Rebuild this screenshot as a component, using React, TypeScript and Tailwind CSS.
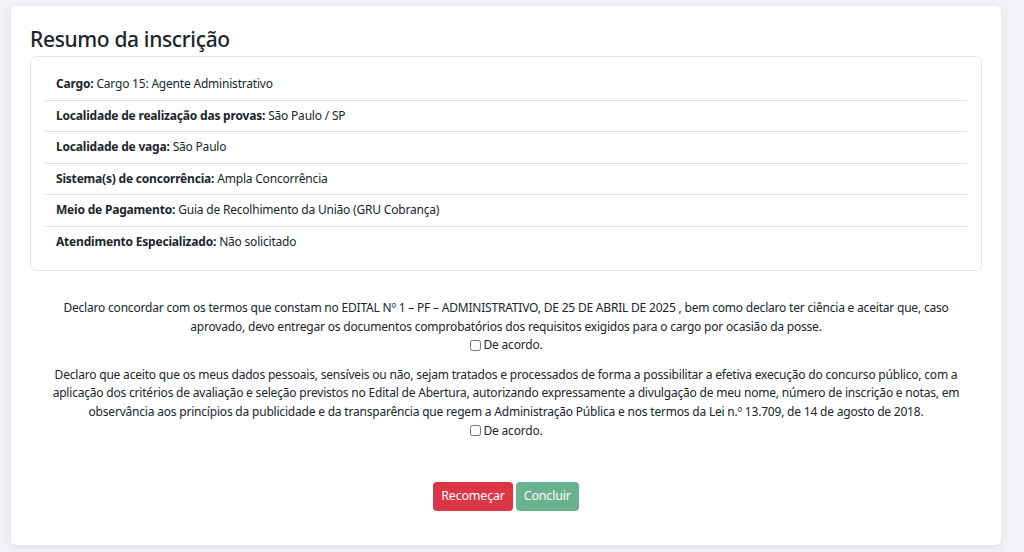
const rows: { label: string; value: string }[] = [
  { label: 'Cargo:', value: 'Cargo 15: Agente Administrativo' },
  { label: 'Localidade de realização das provas:', value: 'São Paulo / SP' },
  { label: 'Localidade de vaga:', value: 'São Paulo' },
  { label: 'Sistema(s) de concorrência:', value: 'Ampla Concorrência' },
  { label: 'Meio de Pagamento:', value: 'Guia de Recolhimento da União (GRU Cobrança)' },
  { label: 'Atendimento Especializado:', value: 'Não solicitado' },
]

function Agree() {
  return (
    <label className="flex items-center justify-center gap-[3px]">
      <input type="checkbox" className="h-[11px] w-[11px] accent-gray-400" />
      De acordo.
    </label>
  )
}

export default function App() {
  return (
    <div
      className="min-h-[552px] bg-[#f1f2f5] pt-[6px] pl-[11px] pr-[23px] text-[#212529]"
      style={{ fontFamily: '"Noto Sans", "Open Sans", sans-serif' }}
    >
      <div className="rounded-[5px] bg-white px-[19px] pt-[19px] pb-[34px] shadow-[0_2px_8px_rgba(0,0,0,0.08)]">
        <h1 className="text-[21px] leading-[29px] font-medium tracking-[-0.35px]">
          Resumo da inscrição
        </h1>

        <div className="mt-[2px] rounded-[6px] border border-[#e6e7ea] px-[14px] py-[12px] text-[12px] tracking-[-0.2px]">
          {rows.map((r, i) => (
            <div
              key={r.label}
              className={
                'flex h-[31.5px] items-center px-[11px] ' +
                (i < rows.length - 1 ? 'border-b border-[#dee2e6]' : '')
              }
            >
              <span className="font-bold">{r.label}</span>
              <span className="ml-[3px]">{r.value}</span>
            </div>
          ))}
        </div>

        <div className="mt-[28px] px-[18px] text-center text-[12px] leading-[18.6px] tracking-[-0.2px]">
          <p>
            Declaro concordar com os termos que constam no EDITAL Nº 1 – PF – ADMINISTRATIVO, DE 25
            DE ABRIL DE 2025 , bem como declaro ter ciência e aceitar que, caso aprovado, devo
            entregar os documentos comprobatórios dos requisitos exigidos para o cargo por ocasião
            da posse.
          </p>
          <Agree />
          <p className="mt-[11px]">
            Declaro que aceito que os meus dados pessoais, sensíveis ou não, sejam tratados e
            processados de forma a possibilitar a efetiva execução do concurso público, com a
            aplicação dos critérios de avaliação e seleção previstos no Edital de Abertura,
            autorizando expressamente a divulgação de meu nome, número de inscrição e notas, em
            observância aos princípios da publicidade e da transparência que regem a Administração
            Pública e nos termos da Lei n.º 13.709, de 14 de agosto de 2018.
          </p>
          <Agree />
        </div>

        <div className="mt-[42px] flex justify-center gap-[3px] text-[12.5px] tracking-[-0.2px]">
          <button className="h-[29px] rounded-[4px] bg-[#dc3545] px-[8px] text-white">
            Recomeçar
          </button>
          <button className="h-[29px] rounded-[4px] bg-[#6ab190] px-[8px] text-white">
            Concluir
          </button>
        </div>
      </div>
    </div>
  )
}
